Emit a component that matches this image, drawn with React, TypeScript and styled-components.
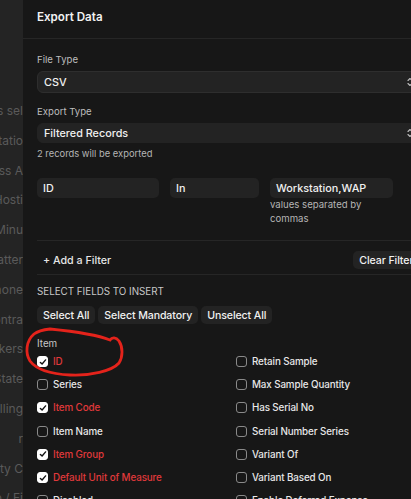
import React from "react";
import styled, { createGlobalStyle } from "styled-components";

const Global = createGlobalStyle`
  html, body { margin: 0; padding: 0; background: #171717; }
  body { font-family: Inter, "Noto Sans", sans-serif; -webkit-font-smoothing: antialiased; }
`;

const Page = styled.div`
  display: flex;
  width: 411px;
  height: 499px;
  overflow: hidden;
  position: relative;
`;

const Backdrop = styled.div`
  width: 23px;
  flex-shrink: 0;
  background: #242424;
  overflow: hidden;
  padding-top: 102px;
  display: flex;
  flex-direction: column;
`;

const BackdropText = styled.div`
  height: 29.8px;
  flex-shrink: 0;
  line-height: 18px;
  font-size: 12px;
  color: #5a5a5a;
  white-space: nowrap;
  width: 23px;
  overflow: hidden;
  display: flex;
  justify-content: flex-end;
`;

const Modal = styled.div`
  width: 411px;
  flex-shrink: 0;
  background: #171717;
  display: flex;
  flex-direction: column;
`;

const Header = styled.div`
  height: 39px;
  flex-shrink: 0;
  box-sizing: border-box;
  padding: 10px 14px 0;
  border-bottom: 1px solid #262626;
  font-size: 11.6px;
  line-height: 15px;
  font-weight: 600;
  color: #f2f2f2;
`;

const Body = styled.div`
  flex-shrink: 0;
  padding: 15px 0 0 14px;
  display: flex;
  flex-direction: column;
`;

const Label = styled.div<{ $mt?: number }>`
  font-size: 9.6px;
  color: #bdbdbd;
  margin-top: ${(p) => p.$mt ?? 0}px;
  margin-bottom: 5px;
  line-height: 12px;
`;

const Select = styled.div<{ $h: number }>`
  height: ${(p) => p.$h}px;
  width: 381px;
  box-sizing: border-box;
  border-radius: 6px;
  background: #232323;
  border: 1px solid ${(p) => (p.$h > 21 ? "#2e2e2e" : "#232323")};
  padding: 0 4px 0 6px;
  display: flex;
  align-items: center;
  justify-content: space-between;
  font-size: 10.8px;
  color: #f0f0f0;
  font-weight: 500;
`;

const Hint = styled.div`
  font-size: 9.4px;
  color: #b5b5b5;
  line-height: 12px;
  margin-top: 5px;
`;

const FilterRow = styled.div`
  display: grid;
  grid-template-columns: 122px 89px 123px;
  column-gap: 11px;
  margin-top: 18px;
  align-items: start;
`;

const FilterBox = styled.div`
  height: 20px;
  border-radius: 5px;
  background: #232323;
  padding: 0 6px;
  display: flex;
  align-items: center;
  font-size: 10.8px;
  color: #f0f0f0;
  font-weight: 500;
`;

const FilterCol = styled.div`
  display: flex;
  flex-direction: column;
`;

const FilterHint = styled.div`
  font-size: 9.6px;
  color: #b5b5b5;
  line-height: 14px;
  width: 100px;
`;

const Divider = styled.div<{ $mt: number }>`
  height: 1px;
  width: 400px;
  background: #262626;
  margin-top: ${(p) => p.$mt}px;
`;

const FilterActions = styled.div`
  display: flex;
  justify-content: space-between;
  align-items: center;
  height: 33px;
  box-sizing: border-box;
  padding-top: 5px;
  width: 388px;
`;

const AddFilter = styled.div`
  font-size: 10.7px;
  color: #e6e6e6;
  padding-left: 6px;
  font-weight: 500;
`;

const SmallButton = styled.div`
  height: 18px;
  border-radius: 5px;
  background: #232323;
  padding: 0 6px;
  display: flex;
  align-items: center;
  font-size: 10.6px;
  letter-spacing: -0.1px;
  color: #f0f0f0;
  font-weight: 500;
  white-space: nowrap;
`;

const SectionTitle = styled.div`
  font-size: 9.8px;
  color: #c8c8c8;
  margin-top: 11px;
  line-height: 12px;
`;

const ButtonRow = styled.div`
  display: flex;
  gap: 3px;
  margin-top: 8px;
`;

const GroupLabel = styled.div`
  font-size: 9.8px;
  color: #c8c8c8;
  margin-top: 14px;
  line-height: 12px;
`;

const FieldGrid = styled.div`
  display: grid;
  grid-template-columns: 199px 199px;
  grid-auto-rows: 23.2px;
`;

const Field = styled.label<{ $req?: boolean }>`
  display: flex;
  align-items: center;
  gap: 5px;
  font-size: 9.8px;
  letter-spacing: -0.1px;
  font-weight: 500;
  color: ${(p) => (p.$req ? "#e0393b" : "#e8e8e8")};
  white-space: nowrap;
`;

const Box = styled.span<{ $on?: boolean }>`
  width: 11px;
  height: 11px;
  box-sizing: border-box;
  border-radius: 3px;
  border: 1px solid ${(p) => (p.$on ? "#ffffff" : "#8a8a8a")};
  background: ${(p) => (p.$on ? "#ffffff" : "transparent")};
  display: flex;
  align-items: center;
  justify-content: center;
  flex-shrink: 0;
`;

const Annotation = styled.svg`
  position: absolute;
  left: 20px;
  top: 325px;
  pointer-events: none;
`;

const backdropItems = [
  "Status sel",
  "Workstatio",
  "Address A",
  "Hosti",
  "Minu",
  "Batter",
  "Phone",
  "Contra",
  "Markers",
  "State",
  "Billing",
  "r",
  "Security C",
  "Laptop / Fi",
];

type F = { label: string; on?: boolean; req?: boolean };
const left: F[] = [
  { label: "ID", on: true, req: true },
  { label: "Series" },
  { label: "Item Code", on: true, req: true },
  { label: "Item Name" },
  { label: "Item Group", on: true, req: true },
  { label: "Default Unit of Measure", on: true, req: true },
  { label: "Disabled" },
];
const right: F[] = [
  { label: "Retain Sample" },
  { label: "Max Sample Quantity" },
  { label: "Has Serial No" },
  { label: "Serial Number Series" },
  { label: "Variant Of" },
  { label: "Variant Based On" },
  { label: "Enable Deferred Expense" },
];

const Check = () => (
  <svg width="8" height="8" viewBox="0 0 8 8">
    <path d="M1.4 4.4 L3.1 6 L6.6 1.9" stroke="#111" strokeWidth="1.4" fill="none" strokeLinecap="round" strokeLinejoin="round" />
  </svg>
);

const Chevrons = () => (
  <svg width="6" height="10" viewBox="0 0 6 10">
    <path d="M1 3.5 L3 1.5 L5 3.5 M1 6.5 L3 8.5 L5 6.5" stroke="#bdbdbd" strokeWidth="1.1" fill="none" strokeLinecap="round" strokeLinejoin="round" />
  </svg>
);

const FieldItem = ({ f }: { f: F }) => (
  <Field $req={f.req}>
    <Box $on={f.on}>{f.on && <Check />}</Box>
    {f.label}
  </Field>
);

export default function App() {
  const rows: React.ReactNode[] = [];
  for (let i = 0; i < left.length; i++) {
    rows.push(<FieldItem key={"l" + i} f={left[i]} />);
    rows.push(<FieldItem key={"r" + i} f={right[i]} />);
  }
  return (
    <Page>
      <Global />
      <Backdrop>
        {backdropItems.map((t) => (
          <BackdropText key={t}>{t}</BackdropText>
        ))}
      </Backdrop>
      <Modal>
        <Header>Export Data</Header>
        <Body>
          <Label>File Type</Label>
          <Select $h={22}>
            CSV
            <Chevrons />
          </Select>
          <Label $mt={13}>Export Type</Label>
          <Select $h={20}>
            Filtered Records
            <Chevrons />
          </Select>
          <Hint>2 records will be exported</Hint>
          <FilterRow>
            <FilterBox>ID</FilterBox>
            <FilterBox>In</FilterBox>
            <FilterCol>
              <FilterBox>Workstation,WAP</FilterBox>
              <FilterHint>values separated by commas</FilterHint>
            </FilterCol>
          </FilterRow>
          <Divider $mt={14} />
          <FilterActions>
            <AddFilter>+ Add a Filter</AddFilter>
            <SmallButton>Clear Filters</SmallButton>
          </FilterActions>
          <Divider $mt={0} />
          <SectionTitle>SELECT FIELDS TO INSERT</SectionTitle>
          <ButtonRow>
            <SmallButton>Select All</SmallButton>
            <SmallButton>Select Mandatory</SmallButton>
            <SmallButton>Unselect All</SmallButton>
          </ButtonRow>
          <GroupLabel>Item</GroupLabel>
          <FieldGrid>{rows}</FieldGrid>
        </Body>
      </Modal>
      <Annotation width="110" height="75" viewBox="0 0 110 75">
        <path
          d="M30 4 C 50 6, 75 9, 90 15 C 92 12, 96 12, 99 16 C 103 22, 103 32, 99 38 C 92 46, 70 51, 50 50 C 30 49, 16 44, 10 36 C 5 28, 6 16, 14 9 C 18 6, 22 5, 30 4"
          stroke="#e4231b"
          strokeWidth="2.8"
          fill="none"
          strokeLinecap="round"
        />
      </Annotation>
    </Page>
  );
}
